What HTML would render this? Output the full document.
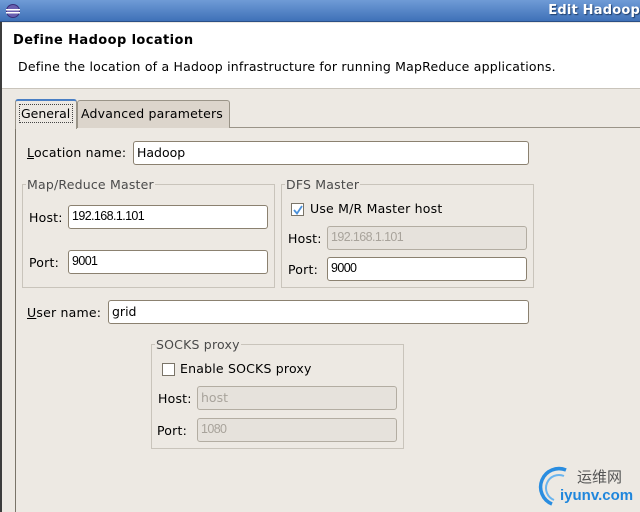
<!DOCTYPE html>
<html><head><meta charset="utf-8"><style>
*{box-sizing:border-box;margin:0;padding:0}
body{width:640px;height:512px;overflow:hidden;background:#ede9e3;font-family:"DejaVu Sans","Liberation Sans",sans-serif;font-size:12.5px;letter-spacing:0.2px;color:#000;position:relative}
.a{position:absolute;white-space:nowrap}
.title{left:0;top:0;width:640px;height:22px;background:linear-gradient(#6f9bd6,#3f71b8);border-bottom:1px solid #2a4f86}
.inp{position:absolute;background:#fff;border:1px solid #8b8170;border-radius:3px;height:24px;padding:3px 0 0 3px;font-family:"Liberation Sans Narrow","Liberation Sans",sans-serif;font-size:12.5px;letter-spacing:-0.6px}
.dis{background:#e6e2dc;border-color:#b3ada2;color:#a8a39b}
.grp{position:absolute;border:1px solid #c9c4bb}
.leg{position:absolute;background:#ede9e3;color:#4a4a4a;padding:0 1px;font-size:12.5px}
.cb{position:absolute;width:13px;height:13px;border:1px solid #7a7468;background:#fff}
</style></head><body>
<div class="a title"></div>
<svg class="a" style="left:5px;top:3px" width="16" height="16"><circle cx="8" cy="8" r="7" fill="#3b2f7a"/><circle cx="8" cy="8" r="6" fill="#6a5fb0"/><rect x="1" y="6" width="14" height="1.5" fill="#fff"/><rect x="1" y="9" width="14" height="1.5" fill="#fff"/></svg>
<div class="a" style="right:0;top:3px;color:#fff;font-weight:bold;font-size:13px;text-shadow:1px 1px 1px #1f3d6a">Edit Hadoop</div>
<div class="a" style="left:0;top:22px;width:2px;height:490px;background:#3c3c3c"></div>
<div class="a" style="left:2px;top:23px;width:638px;height:66px;background:#fff;border-bottom:1px solid #c9c4bb"></div>
<div class="a" style="left:13px;top:33px;font-weight:bold;font-size:13px;letter-spacing:0.4px">Define Hadoop location</div>
<div class="a" style="left:18px;top:59px">Define the location of a Hadoop infrastructure for running MapReduce applications.</div>
<div class="a" style="left:15px;top:127px;width:625px;height:385px;border-left:1px solid #7a7468;border-top:1px solid #9a9488"></div>
<div class="a" style="left:77px;top:100px;width:153px;height:28px;background:#dcd5cc;border:1px solid #9a9488;border-bottom:none;border-radius:3px 3px 0 0"></div>
<div class="a" style="left:81px;top:106px">Advanced parameters</div>
<div class="a" style="left:15px;top:99px;width:62px;height:30px;background:#ede9e3;border:1px solid #9a9488;border-top:2px solid #4a7fc4;border-bottom:none;border-radius:3px 3px 0 0"></div>
<div class="a" style="left:19px;top:104px;width:54px;height:19px;border:1px dotted #444"></div>
<div class="a" style="left:21px;top:106px;letter-spacing:0">General</div>
<div class="a" style="left:27px;top:145px"><u>L</u>ocation name:</div>
<div class="inp" style="left:133px;top:141px;width:396px;font-family:'DejaVu Sans',sans-serif;letter-spacing:0">Hadoop</div>
<div class="grp" style="left:22px;top:184px;width:253px;height:104px"></div>
<div class="leg" style="left:26px;top:177px">Map/Reduce Master</div>
<div class="a" style="left:29px;top:210px">Host:</div>
<div class="inp" style="left:68px;top:205px;width:200px">192.168.1.101</div>
<div class="a" style="left:29px;top:255px">Port:</div>
<div class="inp" style="left:68px;top:250px;width:200px">9001</div>
<div class="grp" style="left:281px;top:184px;width:253px;height:104px"></div>
<div class="leg" style="left:285px;top:177px">DFS Master</div>
<div class="cb" style="left:291px;top:203px"></div>
<svg class="a" style="left:292px;top:204px" width="12" height="12"><path d="M2 6 L5 9.5 L10 2" stroke="#4a90d9" stroke-width="1.8" fill="none"/></svg>
<div class="a" style="left:310px;top:201px">Use M/R Master host</div>
<div class="a" style="left:288px;top:231px">Host:</div>
<div class="inp dis" style="left:327px;top:226px;width:200px">192.168.1.101</div>
<div class="a" style="left:288px;top:262px">Port:</div>
<div class="inp" style="left:327px;top:257px;width:200px">9000</div>
<div class="a" style="left:27px;top:305px"><u>U</u>ser name:</div>
<div class="inp" style="left:108px;top:300px;width:421px;font-family:'DejaVu Sans',sans-serif;letter-spacing:0">grid</div>
<div class="grp" style="left:151px;top:344px;width:253px;height:105px"></div>
<div class="leg" style="left:155px;top:337px">SOCKS proxy</div>
<div class="cb" style="left:162px;top:363px"></div>
<div class="a" style="left:180px;top:361px">Enable SOCKS proxy</div>
<div class="a" style="left:158px;top:391px">Host:</div>
<div class="inp dis" style="left:197px;top:386px;width:200px;font-family:'DejaVu Sans',sans-serif;letter-spacing:0">host</div>
<div class="a" style="left:157px;top:423px">Port:</div>
<div class="inp dis" style="left:197px;top:418px;width:200px">1080</div>
<svg class="a" style="left:536px;top:464px" width="40" height="44"><path d="M30 6 A18 18 0 1 0 16 40" stroke="#2a8de0" stroke-width="3.5" fill="none"/><path d="M28 12 A12 12 0 1 0 18 36" stroke="#6ab4ee" stroke-width="2" fill="none"/></svg>
<div class="a" style="left:577px;top:466px;font-family:'Noto Sans CJK SC',sans-serif;font-size:15px;color:#555;letter-spacing:0">运维网</div>
<div class="a" style="left:560px;top:487px;font-family:'Liberation Sans',sans-serif;font-size:15px;font-weight:bold;color:#1f86dc;letter-spacing:0">iyunv.com</div>
</body></html>
